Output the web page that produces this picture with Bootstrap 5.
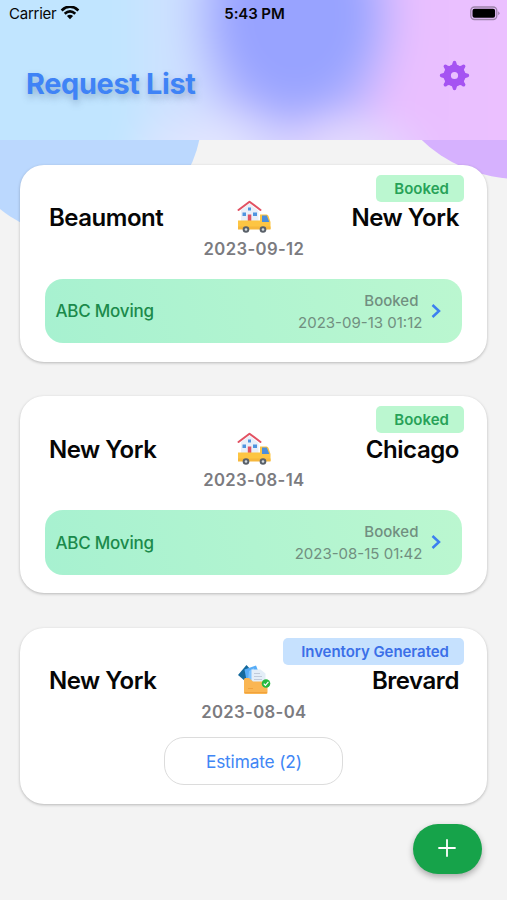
<!DOCTYPE html>
<html lang="en">
<head>
<meta charset="utf-8">
<meta name="viewport" content="width=device-width, initial-scale=1">
<title>Request List</title>
<link href="https://cdn.jsdelivr.net/npm/bootstrap@5.3.0/dist/css/bootstrap.min.css" rel="stylesheet">
<style>
body{font-family:Inter,"Liberation Sans",sans-serif;background:#f3f3f3;color:#060606;width:507px;height:900px;overflow:hidden}
.screen{height:900px;isolation:isolate;overflow:hidden}
.blob{position:absolute;border-radius:50%;z-index:-1}
.blob-blue{left:-45px;top:-8px;width:247px;height:245px;background:#bbd8fe}
.blob-purple{left:378px;top:-103px;width:282px;height:282px;background:#d6b1fe}
.hero{height:140px;position:relative;overflow:hidden;isolation:isolate;background:#c1e5ff}
.hero::before{content:"";position:absolute;inset:-40px;z-index:-1;filter:blur(12px);background:
 radial-gradient(ellipse 100px 60px at 255px 195px,rgba(228,231,255,.9) 20%,rgba(228,231,255,0) 100%),
 radial-gradient(ellipse 90px 55px at 390px 195px,rgba(228,219,254,.95) 25%,rgba(228,219,254,0) 100%),
 radial-gradient(ellipse 122px 148px at 335px 55px,#98a3ff 0,#98a3ff 45%,rgba(155,166,255,.78) 60%,rgba(165,172,255,.32) 80%,rgba(175,180,255,0) 100%),
 linear-gradient(90deg,#c1e5ff 0,#c1e5ff 160px,#cbe3ff 195px,#cedcff 240px,#ccc8ff 290px,#d5c0ff 390px,#e8bfff 430px,#ebc0ff 547px)}
.status-bar{height:28px;font-size:15px;line-height:28px;padding:0 7px 0 9px}
.carrier{letter-spacing:-.25px;width:200px}
.clock{font-weight:600;letter-spacing:-.1px}
.page-title{font-size:28.8px;font-weight:700;line-height:36px;letter-spacing:-.3px;color:#3f83f6;text-shadow:1px 4px 7px rgba(60,90,130,.36);padding:38px 0 0 26px}
.gear{margin:32px 37px 0 0}
.requests{padding:24.5px 19.6px 0 20.4px;gap:34.5px}
.request{height:197px;border:0;border-radius:24px;padding:0 25px;background:#fff;box-shadow:0 1px 3px rgba(0,0,0,.25)}
.request-short{height:176px}
.state{position:absolute;top:10px;right:23.5px;height:27px;border-radius:5px;padding:0 15px 0 18px;font-size:15px;font-weight:600;line-height:27px;letter-spacing:0}
.state-booked{background:#bbf7d0;color:#27a258}
.state-inventory{background:#c6e1fe;color:#3b6fe8;letter-spacing:-.05px}
.route{display:grid;grid-template-columns:1fr 36px 1fr;padding:35px 3.5px 0;height:72px;align-items:center}
.city{font-size:24px;font-weight:600;line-height:36px;letter-spacing:-.46px;white-space:nowrap}
.move-date{font-size:16.7px;font-weight:600;line-height:24px;letter-spacing:.35px;color:#7b7b7f}
.offer{height:64.5px;border-radius:18px;margin-top:18px;padding:0 18px 0 10px;background:linear-gradient(75deg,#a7f1d0,#bbf7d0)}
.mover{font-size:17px;font-weight:500;color:#1b8a4b;letter-spacing:-.2px;padding-top:2px}
.offer-info{font-size:15px;line-height:22px;color:#718f80;letter-spacing:0;padding-top:2px;margin-right:6px}
.offer-state{font-weight:500;padding-right:4px}
.estimate{width:179px;height:48px;border:1.5px solid #dcdcdc;border-radius:20px;margin-top:13.500px;color:#4086f5;font-size:17.3px;letter-spacing:-.15px;line-height:1;padding:2px 0 0}
.add{position:absolute;left:413px;top:824px;width:69px;height:49.500px;border:0;border-radius:25px;background:#16a34a;box-shadow:0 3px 6px rgba(0,0,0,.3);padding:0 8px 2px 6px}
</style>
<script src="https://cdn.jsdelivr.net/npm/bootstrap@5.3.0/dist/js/bootstrap.bundle.min.js"></script>
</head>
<body>
<svg width="0" height="0" class="position-absolute">
 <symbol id="truck" viewBox="0 0 34 34">
  <path d="M4 10 12.500 3.500 21.500 11V21H4Z" fill="#e9eff9"/>
  <path d="M1.500 10 12.500 1.700 23.500 10" fill="none" stroke="#e25263" stroke-width="2" stroke-linejoin="round" stroke-linecap="round"/>
  <path d="M11 7.500h3v3h-3zM5.500 12.500h3.500v3.500H5.500zM16 12.500h4v3.500h-4z" fill="#4f94df"/>
  <path d="M10.800 14.500h3.500v7h-3.500z" fill="#e25263"/>
  <path d="M1 20.500H23V14.500H29.500Q31 14.500 31.500 16L33.500 22V29H1Z" fill="#fdc543"/>
  <path d="M1 26.500H33.500V29.500H1Z" fill="#f6b73d"/>
  <path d="M25 15.500H29.800L32.300 22H25Z" fill="#4b8edb"/>
  <circle cx="9" cy="29.500" r="3.300" fill="#596069"/><circle cx="9" cy="29.500" r="1.300" fill="#d5dade"/>
  <circle cx="26" cy="29.500" r="3.300" fill="#596069"/><circle cx="26" cy="29.500" r="1.300" fill="#d5dade"/>
 </symbol>
 <symbol id="folder" viewBox="0 0 34 34">
  <path d="M1 12 9.500 2 15 8V20L8 18Z" fill="#14699c"/>
  <path d="M7.500 6.500 19 2.500 24 15 10 20Z" fill="#58adf7"/>
  <path d="M12 8 17 5 18 18H11Z" fill="#80c4ff"/>
  <path d="M14.500 6.500H23.500L28.500 10.500V22H14.500Z" fill="#e4eef8"/>
  <path d="M17 10.500h6M17 13.500h8M17 16.500h8" stroke="#c0cbda" stroke-width="1"/>
  <path d="M7 16.500Q7 15 8.500 15H12L16 18.500H29Q30.500 18.500 30.500 20V29.500Q30.500 31 29 31H8.500Q7 31 7 29.500Z" fill="#fab653"/>
  <path d="M11 25.500h5M7.500 29.500h22.500" stroke="#f1a23c" stroke-width="1.200"/>
  <circle cx="29" cy="20.500" r="4.300" fill="#25b93f"/>
  <path d="m26.800 20.600 1.600 1.700 3-3.500" fill="none" stroke="#fff" stroke-width="1.200"/>
 </symbol>
 <symbol id="chevron" viewBox="0 0 12 16"><path d="M2.500 2 9 8 2.500 14" fill="none" stroke="#3c80f0" stroke-width="2.500"/></symbol>
</svg>
<main class="screen position-relative d-flex flex-column">
 <div class="blob blob-blue"></div><div class="blob blob-purple"></div>
 <header class="hero flex-shrink-0">
  <div class="status-bar d-flex justify-content-between align-items-center">
   <div class="carrier d-flex align-items-center">Carrier
    <svg class="ms-1" width="20" height="16" viewBox="0 1 20 16" fill="none" stroke="#050505" stroke-width="2.700"><path d="M1.600 5.400Q10-2.100 18.400 5.400M4.700 8.700Q10 4.200 15.300 8.700"/><path d="M6.900 10.900Q10 8.500 13.100 10.900L10 14.200Z" fill="#050505" stroke="none"/></svg>
   </div>
   <div class="clock">5:43 PM</div>
   <div class="carrier d-flex justify-content-end">
    <svg width="30" height="17" viewBox="0 0 30 17"><rect x=".8" y="1" width="26" height="12.500" rx="3.700" fill="none" stroke="#9d82aa" stroke-width="1.300"/><rect x="2.500" y="2.700" width="22.600" height="9.100" rx="2" fill="#000"/><path d="M28.200 5.200Q30.800 7.200 28.200 9.300Z" fill="#9d82aa"/></svg>
   </div>
  </div>
  <div class="d-flex justify-content-between">
   <h1 class="page-title mb-0">Request List</h1>
   <svg class="gear" width="31" height="31" viewBox="-15.500 -15.500 31 31" fill="#a553f2">
    <path fill-rule="evenodd" d="M0-10.800A10.800 10.800 0 1 1 0 10.800A10.800 10.800 0 1 1 0-10.800ZM0-3.600A3.600 3.600 0 1 0 0 3.600A3.600 3.600 0 1 0 0-3.600Z"/>
    <g id="teeth"><path id="tooth" d="M-4.200-9.500Q-1.800-11-1.900-12.800Q-1.700-14.700 0-14.700Q1.700-14.700 1.900-12.800Q1.800-11 4.200-9.500Z"/><use href="#tooth" transform="rotate(45)"/><use href="#tooth" transform="rotate(90)"/><use href="#tooth" transform="rotate(135)"/></g>
    <use href="#teeth" transform="rotate(180)"/>
   </svg>
  </div>
 </header>
 <section class="requests d-flex flex-column">
  <article class="request card">
   <span class="state state-booked">Booked</span>
   <div class="route"><span class="city">Beaumont</span><svg width="36" height="36"><use href="#truck" x="1" y="0" width="34" height="34"/></svg><span class="city text-end">New York</span></div>
   <div class="move-date text-center">2023-09-12</div>
   <div class="offer d-flex align-items-center">
    <span class="mover me-auto">ABC Moving</span>
    <div class="offer-info text-end"><div class="offer-state">Booked</div><div>2023-09-13 01:12</div></div>
    <svg width="16" height="16"><use href="#chevron" x="2" width="12" height="16"/></svg>
   </div>
  </article>
  <article class="request card">
   <span class="state state-booked">Booked</span>
   <div class="route"><span class="city">New York</span><svg width="36" height="36"><use href="#truck" x="1" y="0" width="34" height="34"/></svg><span class="city text-end">Chicago</span></div>
   <div class="move-date text-center">2023-08-14</div>
   <div class="offer d-flex align-items-center">
    <span class="mover me-auto">ABC Moving</span>
    <div class="offer-info text-end"><div class="offer-state">Booked</div><div>2023-08-15 01:42</div></div>
    <svg width="16" height="16"><use href="#chevron" x="2" width="12" height="16"/></svg>
   </div>
  </article>
  <article class="request request-short card">
   <span class="state state-inventory">Inventory Generated</span>
   <div class="route"><span class="city">New York</span><svg width="36" height="36"><use href="#folder" x="1" y="0" width="34" height="34"/></svg><span class="city text-end">Brevard</span></div>
   <div class="move-date text-center">2023-08-04</div>
   <button class="btn estimate mx-auto">Estimate (2)</button>
  </article>
 </section>
 <button class="add d-flex align-items-center justify-content-center" aria-label="Add request"><svg width="18" height="18" viewBox="0 0 18 18"><path d="M9 1v16M1 9h16" stroke="#fff" stroke-width="1.800" stroke-linecap="round"/></svg></button>
</main>
</body>
</html>
